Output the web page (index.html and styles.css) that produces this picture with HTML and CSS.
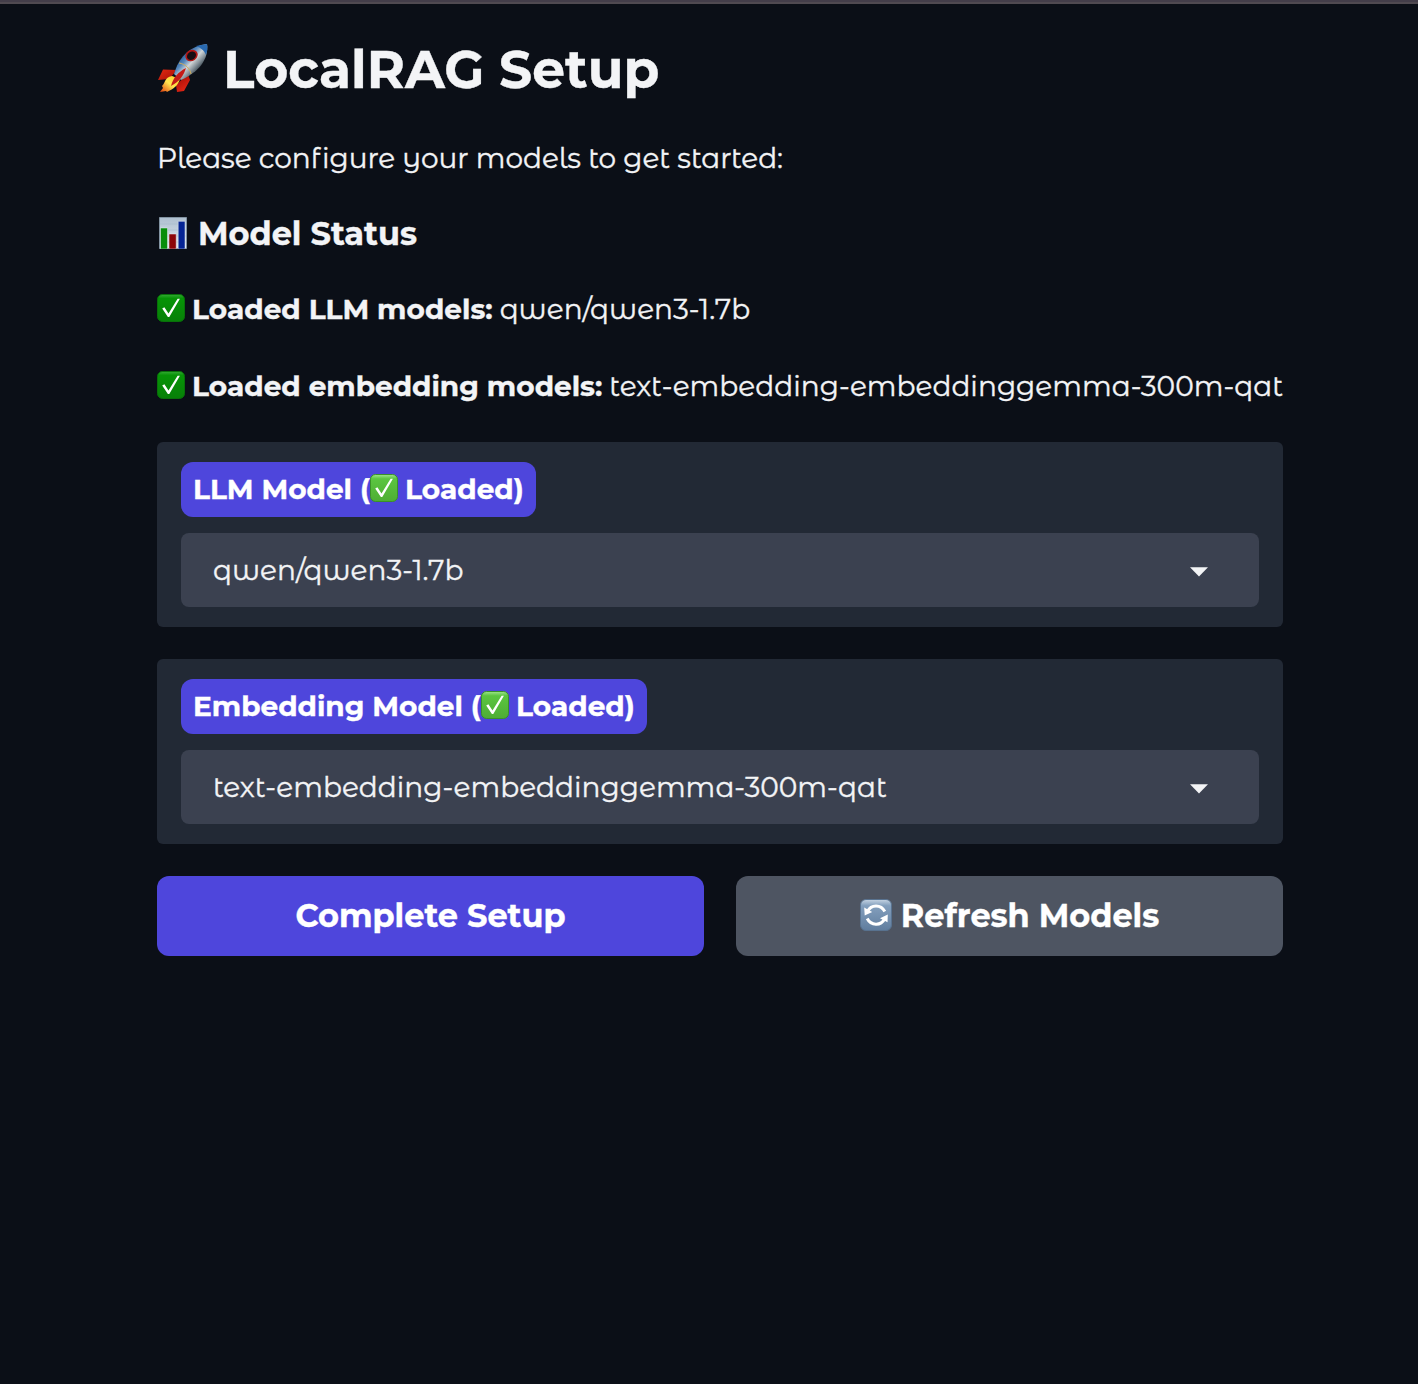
FILE: index.html
```html
<!DOCTYPE html>
<html lang="en">
<head>
<meta charset="utf-8">
<title>LocalRAG Setup</title>
<link rel="stylesheet" href="styles.css">
</head>
<body>
<svg class="defs" width="0" height="0" aria-hidden="true">
  <defs>
    <linearGradient id="deep" x1="0" y1="0" x2="0" y2="1"><stop offset="0" stop-color="#35ab35"/><stop offset=".14" stop-color="#079407"/><stop offset="1" stop-color="#078008"/></linearGradient>
    <linearGradient id="lime" x1="0" y1="0" x2="0" y2="1"><stop offset="0" stop-color="#a0e58d"/><stop offset=".16" stop-color="#5bc540"/><stop offset="1" stop-color="#4eae34"/></linearGradient>
    <linearGradient id="steel" x1="0" y1="0" x2="0" y2="1"><stop offset="0" stop-color="#c5d4e3"/><stop offset=".2" stop-color="#839fbd"/><stop offset="1" stop-color="#607d9e"/></linearGradient>
    <linearGradient id="paper" x1="0" y1="0" x2="0" y2="1"><stop offset="0" stop-color="#aebfcf"/><stop offset="1" stop-color="#e2e9ef"/></linearGradient>
    <linearGradient id="hull" x1="0" y1="0" x2="1" y2="1"><stop offset=".25" stop-color="#1d5495"/><stop offset=".4" stop-color="#5688bd"/><stop offset=".52" stop-color="#d0d4d6"/><stop offset=".62" stop-color="#8b969e"/><stop offset=".76" stop-color="#26333d"/></linearGradient>
    <linearGradient id="flame" x1="1" y1="0" x2="0" y2="1"><stop offset="0" stop-color="#ffca24"/><stop offset=".5" stop-color="#ffe650"/><stop offset="1" stop-color="#e03a0b"/></linearGradient>
    <linearGradient id="fin" x1="0" y1="0" x2="1" y2="1"><stop offset="0" stop-color="#e22a12"/><stop offset=".5" stop-color="#a80f07"/><stop offset="1" stop-color="#ee2b18"/></linearGradient>
    <symbol id="tick" viewBox="0 0 28 28"><path d="M5.2 14.4l2.2-1.1 4.1 6.3L20.6 4.8l2.3-.1L12.3 23h-1.4z" fill="#fff"/></symbol>
  </defs>
</svg>
<main class="page">
  <h1 class="title">
    <svg class="rocket" viewBox="0 0 52 52">
      <path d="M20 27L6 26.5 1 37l11-1zM31 31L19 42l1 7 7-1 6-11z" fill="url(#fin)"/>
      <path d="M15 33c-8 2-6 6-10 10l1 2-3 4 6-1 1 1c6-3 11-6 13-13z" fill="url(#flame)"/>
      <path d="M18 28C23 13 33 3 50 1c2 15-8 28-26 36l-7-6z" fill="url(#hull)"/>
      <path d="M39 3l11-2c1 4 0 8-1 11-2-5-5-7-10-9z" fill="#2969b0"/>
      <path d="M22 20c6 1 11 5 12 11" stroke="#d1ad59" stroke-width="1" fill="none"/>
      <ellipse cx="34.5" cy="12.5" rx="6.5" ry="5.5" transform="rotate(-35 34.5 12.5)" fill="#b31614"/>
      <ellipse cx="34.5" cy="12.7" rx="4.8" ry="3.9" transform="rotate(-35 34.5 12.7)" fill="#160d13"/>
      <path d="M29 25c-8 4-13 10-15 18 8-4 13-11 15-18z" fill="#c51b18"/>
    </svg>
    <span>LocalRAG Setup</span>
  </h1>
  <p class="intro">Please configure your models to get started:</p>
  <h3 class="subtitle">
    <svg class="chart" viewBox="0 0 28 32">
      <path d="M.5.5h27v31H.5z" fill="url(#paper)" stroke="#8293a2"/>
      <path d="M1 7h26M1 13h26M1 19h26M1 25h26" stroke="#a3b4c4" stroke-width=".5"/>
      <path d="M1.5 11h7v21h-7z" fill="#078d0a" stroke="#e6edf1" stroke-width=".5"/>
      <path d="M10 17h7.2v15H10z" fill="#8c0508" stroke="#e6edf1" stroke-width=".5"/>
      <path d="M19.2 4.3H26V32h-6.8z" fill="#052494" stroke="#e6edf1" stroke-width=".5"/>
    </svg>
    <span>Model Status</span>
  </h3>
  <p class="status">
    <svg class="check" viewBox="0 0 28 28"><rect x=".5" y=".5" width="27" height="27" rx="5" fill="url(#deep)" stroke="#087109"/><use href="#tick"/></svg>
    <strong>Loaded LLM models:</strong><span>qwen/qwen3-1.7b</span>
  </p>
  <p class="status status-last">
    <svg class="check" viewBox="0 0 28 28"><rect x=".5" y=".5" width="27" height="27" rx="5" fill="url(#deep)" stroke="#087109"/><use href="#tick"/></svg>
    <strong>Loaded embedding models:</strong><span>text-embedding-embeddinggemma-300m-qat</span>
  </p>
  <section class="block">
    <div class="label label-llm">
      <span class="llm-name">LLM Model (</span><svg class="check badge" viewBox="0 0 28 28"><rect x=".5" y=".5" width="27" height="27" rx="5" fill="url(#lime)" stroke="#3a9228"/><use href="#tick"/></svg><span>Loaded)</span>
    </div>
    <div class="select"><span>qwen/qwen3-1.7b</span><svg class="caret" viewBox="0 0 18 10"><path d="M0 .3h18L9 9.5z" fill="#f3f4f6"/></svg></div>
  </section>
  <section class="block">
    <div class="label label-emb">
      <span class="emb-name">Embedding Model (</span><svg class="check badge" viewBox="0 0 28 28"><rect x=".5" y=".5" width="27" height="27" rx="5" fill="url(#lime)" stroke="#3a9228"/><use href="#tick"/></svg><span>Loaded)</span>
    </div>
    <div class="select"><span>text-embedding-embeddinggemma-300m-qat</span><svg class="caret" viewBox="0 0 18 10"><path d="M0 .3h18L9 9.5z" fill="#f3f4f6"/></svg></div>
  </section>
  <div class="actions">
    <button class="button primary">Complete Setup</button>
    <button class="button secondary">
      <svg class="refresh" viewBox="0 0 32 32"><rect x=".5" y=".5" width="31" height="31" rx="5.5" fill="url(#steel)" stroke="#58728f"/><g fill="none" stroke="#fff" stroke-width="3"><path d="M7.5 12.5C11 5 21 5 24.8 12.5"/><path d="M24.5 20C21 27 11 27 7.2 19.5"/></g><path d="M4.2 8.5l.5 8 7.5-3.4zM27.8 15.5l-7.8 3.8 7.5 4z" fill="#fff"/></svg>
      <span>Refresh Models</span>
    </button>
  </div>
</main>
</body>
</html>
```
FILE: styles.css
```css
* { box-sizing: border-box; }
body {
  margin: 0;
  min-height: 1384px;
  background: #0b0f17;
  border-top: 2px solid #443e4a;
  color: #f3f4f6;
  font-family: "Montserrat Alternates", Montserrat, Inter, sans-serif;
  font-size: 28px;
  -webkit-text-stroke: 0.35px currentColor;
}
.defs { display: block; }
.page {
  width: 1126px;
  margin-left: 157px;
  white-space: nowrap;
}
.page::before {
  content: "";
  display: block;
  height: 2px;
  margin: 0 -135px 0 -157px;
  background: #504a51;
}
h1, h3, p { margin: 0; display: flex; align-items: center; }
h1, h3, strong, .label { font-family: Montserrat, Inter, sans-serif; font-weight: 700; }
.title { height: 66px; margin-top: 32px; font-size: 52px; }
.rocket { width: 52px; height: 52px; margin: 0 14px 0 0; }
.intro { height: 42px; margin-top: 35px; letter-spacing: -0.065px; font-variant-ligatures: common-ligatures; }
.subtitle { height: 42px; margin-top: 33px; font-size: 32px; }
.chart { width: 28px; height: 32px; margin: 0 11px 0 2px; }
.status { height: 42px; margin-top: 34px; }
.status-last { margin-top: 35px; }
.check { width: 28px; height: 28px; margin-right: 7px; flex: none; }
.status .check { margin-top: -2px; }
.label .badge { margin-top: -2px; }
.status strong { margin-right: 7px; }
.block {
  height: 185px;
  padding: 20px 24px;
  border-radius: 6px;
  background: #222935;
}
.status-last + .block { margin-top: 35px; }
.block + .block { margin-top: 32px; }
.label {
  display: flex;
  align-items: center;
  height: 55px;
  padding: 0 0 2px 12px;
  border-radius: 12px;
  background: #4e46dc;
  color: #fff;
}
.label-llm { width: 355px; }
.label-emb { width: 466px; }
.llm-name { width: 177px; }
.emb-name { width: 288px; }
.select {
  display: flex;
  align-items: center;
  justify-content: space-between;
  height: 74px;
  margin-top: 16px;
  padding: 0 51px 0 32px;
  border-radius: 8px;
  background: #3b4150;
}
.caret { width: 18px; height: 10px; margin-top: 4px; }
.actions { display: grid; grid-template-columns: 1fr 1fr; gap: 32px; margin-top: 32px; }
.button {
  display: flex;
  align-items: center;
  justify-content: center;
  height: 80px;
  padding: 0 0 2px;
  border: 0;
  border-radius: 12px;
  color: #fff;
  font: 700 32px Montserrat, Inter, sans-serif;
  white-space: nowrap;
}
.primary { background: #4e46dc; }
.secondary { background: #4e5562; }
.refresh { width: 32px; height: 32px; margin-right: 9px; }
```
